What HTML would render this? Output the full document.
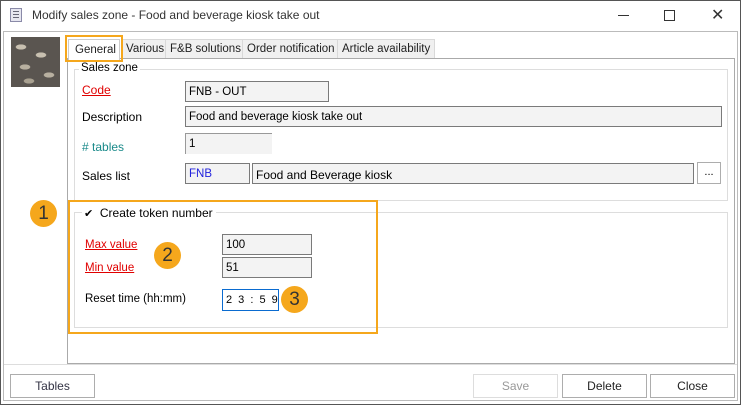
<!DOCTYPE html>
<html><head><style>
*{box-sizing:border-box;margin:0;padding:0}
body{width:741px;height:405px;background:#fff;font-family:"Liberation Sans",sans-serif;font-size:12px;color:#000;position:relative;overflow:hidden}
.a{position:absolute}
.inp{position:absolute;background:#f3f3f3;border:1px solid #7a7a7a;padding:4px 0 0 3px;font-size:11.5px;height:21px;white-space:nowrap}
.lbl{position:absolute;font-size:12px;white-space:nowrap}
.red{color:#e00000;text-decoration:underline}
.btn{position:absolute;top:374px;height:24px;border:1px solid #adadad;background:#fff;text-align:center;line-height:22px;font-size:12px;color:#222}
.circ{position:absolute;width:27px;height:27px;border-radius:50%;background:#f5a71c;color:#333;font-size:19px;text-align:center;line-height:27px}
.tab{position:absolute;top:39px;height:20px;background:#f0f0f0;border:1px solid #d9d9d9;border-bottom:none;font-size:11.5px;line-height:18px;padding:0 4px;color:#222;white-space:nowrap}
</style></head><body>
<div class="a" style="left:0;top:0;width:741px;height:405px;border:1px solid #555"></div>
<div class="a" style="left:10px;top:8px;width:12px;height:14px;border:1px solid #8a8aa8;background:#e6e6f0"></div>
<div class="a" style="left:13px;top:11px;width:6px;height:1px;background:#667;box-shadow:0 3px #667,0 6px #667"></div>
<div class="lbl" style="left:32px;top:8px;color:#333">Modify sales zone - Food and beverage kiosk take out</div>
<div class="a" style="left:618px;top:15px;width:11px;height:1px;background:#333"></div>
<div class="a" style="left:664px;top:10px;width:11px;height:11px;border:1px solid #333"></div>
<div class="lbl" style="left:711px;top:5px;font-size:16px;color:#333">✕</div>
<div class="a" style="left:3px;top:31px;width:735px;height:370px;border:1px solid #bbb"></div>
<div class="a" style="left:11px;top:37px;width:49px;height:50px;background:radial-gradient(ellipse 8px 4px at 10px 10px,#c8c0b0 60%,transparent 70%),radial-gradient(ellipse 8px 4px at 30px 18px,#c8c0b0 60%,transparent 70%),radial-gradient(ellipse 8px 4px at 14px 30px,#b8b0a0 60%,transparent 70%),radial-gradient(ellipse 8px 4px at 38px 38px,#b8b0a0 60%,transparent 70%),radial-gradient(ellipse 8px 4px at 18px 44px,#a8a090 60%,transparent 70%),#5a5550"></div>
<div class="tab" style="left:121px">Various</div>
<div class="tab" style="left:165px">F&amp;B solutions</div>
<div class="tab" style="left:242px">Order notification</div>
<div class="tab" style="left:337px">Article availability</div>
<div class="a" style="left:67px;top:58px;width:668px;height:306px;border:1px solid #aaa;background:#fff"></div>
<div class="a" style="left:68px;top:39px;width:52px;height:21px;background:#fff;border:1px solid #ccc;border-bottom:none;font-size:11.5px;line-height:20px;padding-left:6px;color:#222">General</div>
<div class="a" style="left:65px;top:35px;width:58px;height:27px;border:2px solid #f5a71c"></div>
<div class="a" style="left:74px;top:69px;width:654px;height:132px;border:1px solid #ddd"></div>
<div class="lbl" style="left:79px;top:62px;background:#fff;padding:0 2px;font-size:11.5px">Sales zone</div>
<div class="lbl red" style="left:82px;top:83px">Code</div>
<div class="inp" style="left:185px;top:81px;width:144px">FNB - OUT</div>
<div class="lbl" style="left:82px;top:110px">Description</div>
<div class="inp" style="left:185px;top:106px;width:537px">Food and beverage kiosk take out</div>
<div class="lbl" style="left:82px;top:140px;color:#1a8a8a">#&nbsp;tables</div>
<div class="inp" style="left:185px;top:133px;width:87px;border-right:none;border-bottom:none;border-color:#999">1</div>
<div class="lbl" style="left:82px;top:169px">Sales list</div>
<div class="inp" style="left:185px;top:163px;width:65px;color:#22d">FNB</div>
<div class="inp" style="left:252px;top:163px;width:442px;font-size:12px">Food and Beverage kiosk</div>
<div class="a" style="left:697px;top:162px;width:24px;height:22px;border:1px solid #adadad;text-align:center;font-size:11px;line-height:18px">...</div>
<div class="a" style="left:74px;top:212px;width:654px;height:116px;border:1px solid #ddd"></div>
<div class="lbl" style="left:82px;top:206px;background:#fff;padding:0 3px 0 2px;font-size:12px"><span style="font-size:11px">✔</span>&nbsp; Create token number</div>
<div class="lbl red" style="left:85px;top:239px;font-size:11.5px">Max value</div>
<div class="lbl red" style="left:85px;top:262px;font-size:11.5px">Min value</div>
<div class="inp" style="left:222px;top:234px;width:90px">100</div>
<div class="inp" style="left:222px;top:257px;width:90px">51</div>
<div class="lbl" style="left:85px;top:293px;font-size:11.5px">Reset time (hh:mm)</div>
<div class="a" style="left:222px;top:289px;width:57px;height:22px;border:1px solid #0a6bd0;font-size:11px;padding:4px 0 0 3px;white-space:nowrap;letter-spacing:1.5px">2 3 : 5 9</div>
<div class="a" style="left:68px;top:200px;width:310px;height:134px;border:2px solid #f5a71c"></div>
<div class="circ" style="left:30px;top:200px">1</div>
<div class="circ" style="left:154px;top:242px">2</div>
<div class="circ" style="left:281px;top:286px">3</div>
<div class="a" style="left:4px;top:364px;width:733px;height:1px;background:#ddd"></div>
<div class="btn" style="left:10px;width:85px;color:#334">Tables</div>
<div class="btn" style="left:473px;width:85px;color:#999;border-color:#ddd">Save</div>
<div class="btn" style="left:562px;width:85px">Delete</div>
<div class="btn" style="left:650px;width:85px">Close</div>
</body></html>
